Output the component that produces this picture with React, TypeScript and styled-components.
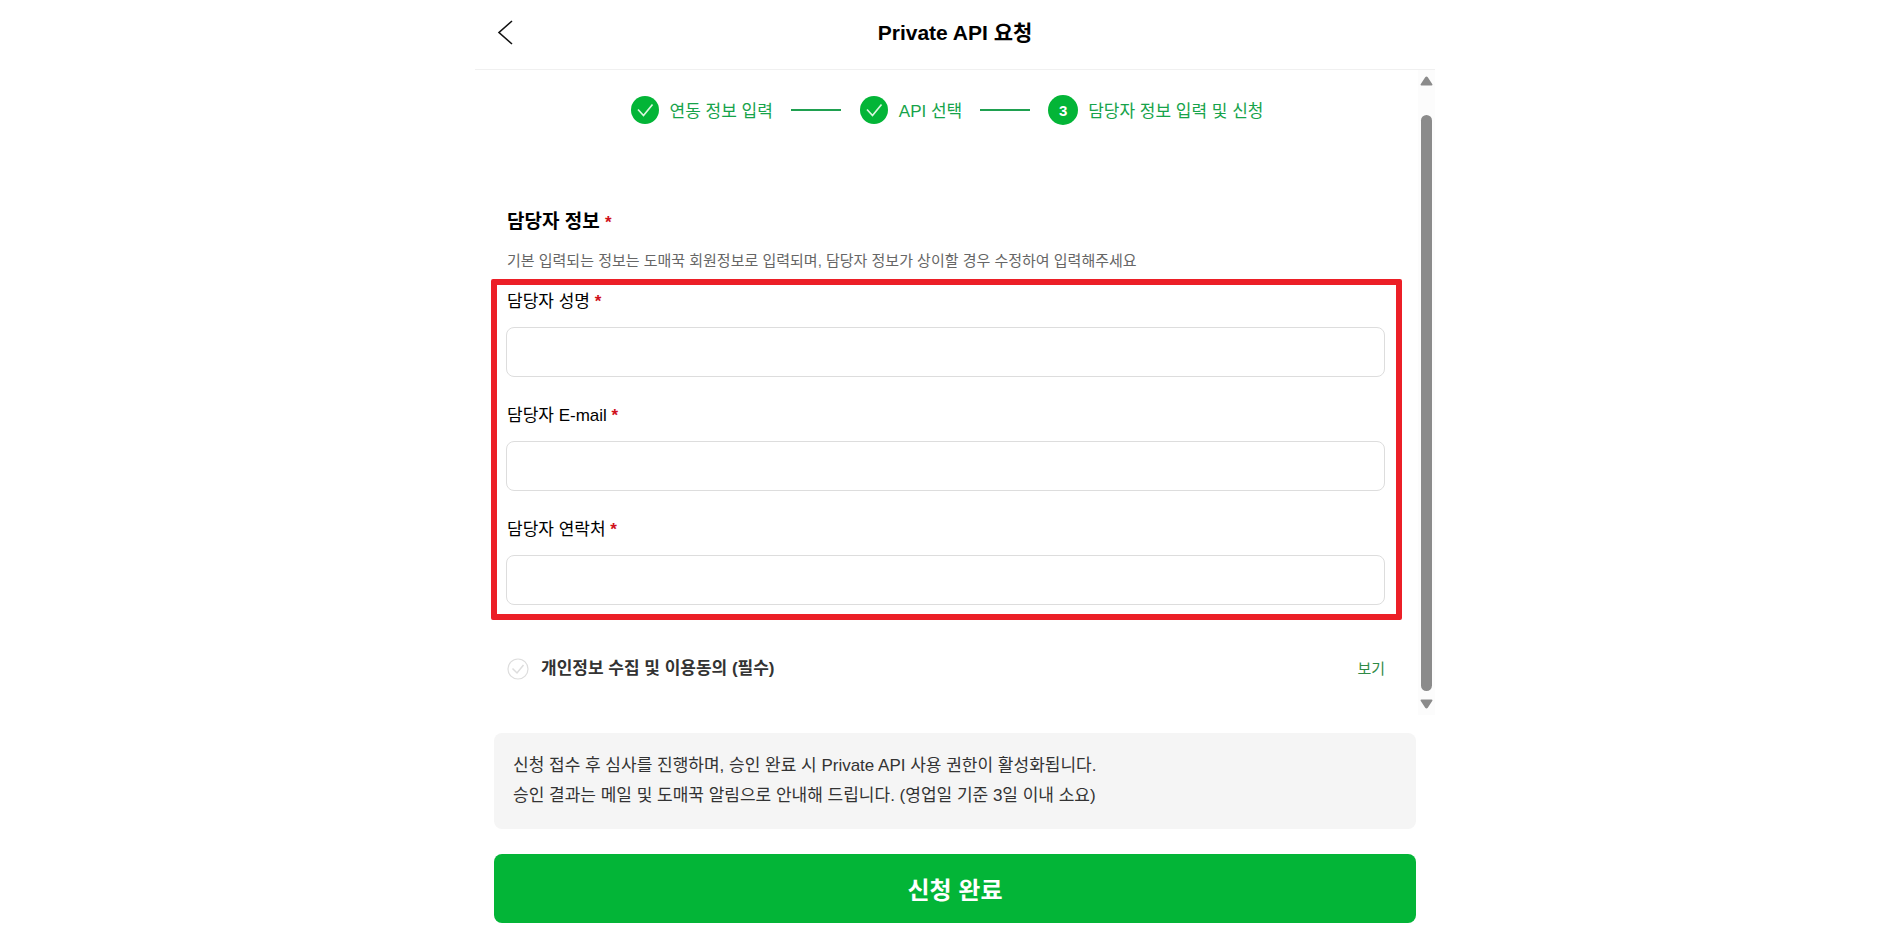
import React, { useState } from "react";
import styled, { createGlobalStyle } from "styled-components";

const GlobalStyle = createGlobalStyle`
  *, *::before, *::after { box-sizing: border-box; }
  body {
    margin: 0;
    padding-left: 10px;
    background: #fff;
    color: #000;
    font-family: "Liberation Sans", "Noto Sans CJK KR", sans-serif;
  }
  button, input { font-family: inherit; }
`;

const Page = styled.div`
  width: 100%;
  max-width: 960px;
  margin: 0 auto;
  padding-bottom: 12px;
`;

const Header = styled.header`
  display: grid;
  grid-template-columns: 60px 1fr 60px;
  align-items: center;
  height: 70px;
  padding-bottom: 4px;
  border-bottom: 1px solid #f0f0f0;
`;

const BackButton = styled.button`
  display: flex;
  align-items: center;
  justify-content: center;
  height: 40px;
  padding: 0;
  border: 0;
  background: none;
  cursor: pointer;
`;

const Title = styled.h1`
  margin: 0;
  font-size: 21px;
  line-height: 30px;
  text-align: center;
`;

const ScrollArea = styled.div`
  display: flex;
`;

const Content = styled.main`
  flex: 1;
  min-width: 0;
  padding: 23px 16px 30px;
`;

const Track = styled.div`
  display: flex;
  flex-direction: column;
  align-items: center;
  gap: 8px;
  width: 17px;
  padding: 6px 1px 6px 0;
  background: #fcfcfc;
`;

const Thumb = styled.div`
  flex: 1;
  width: 11px;
  margin-top: 21px;
  border-radius: 6px;
  background: #8b8b8b;
`;

const Steps = styled.ol`
  display: flex;
  align-items: center;
  justify-content: center;
  gap: 18px;
  margin: 0 0 78px;
  padding: 0;
  list-style: none;
`;

const Step = styled.li`
  display: flex;
  align-items: center;
  gap: 10px;
  color: #16a34a;
`;

const StepLabel = styled.span`
  padding-top: 4px;
  font-size: 17px;
  line-height: 30px;
`;

const StepLine = styled.li`
  width: 50px;
  height: 2px;
  background: #1fa050;
`;

const StepNumber = styled.span`
  display: flex;
  align-items: center;
  justify-content: center;
  width: 30px;
  height: 30px;
  border-radius: 50%;
  background: #03b537;
  color: #fff;
  font-size: 15px;
  font-weight: 700;
`;

const SectionTitle = styled.h2`
  margin: 0;
  padding: 0 16px;
  font-size: 19px;
  line-height: 34px;
`;

const Required = styled.span`
  color: #d0111b;
  font-size: 17px;
  font-weight: 700;
`;

const Description = styled.p`
  margin: 9px 0 6px;
  padding: 0 16px;
  color: #666;
  font-size: 15px;
  line-height: 24px;
`;

const Highlight = styled.div`
  display: flex;
  flex-direction: column;
  gap: 25px;
  padding: 3px 11px 9px 9px;
  border: 6px solid #ec1f27;
  border-radius: 2px;
`;

const Field = styled.div`
  display: flex;
  flex-direction: column;
  gap: 11px;
`;

const Label = styled.label`
  padding-left: 1px;
  font-size: 17px;
  line-height: 28px;
`;

const TextInput = styled.input`
  width: 100%;
  height: 50px;
  padding: 0 16px;
  border: 1px solid #ddd;
  border-radius: 8px;
  background: #fff;
  font-size: 17px;
`;

const Agreement = styled.div`
  display: flex;
  align-items: center;
  justify-content: space-between;
  margin-top: 33px;
  padding: 0 17px 0 16px;
`;

const AgreeLabel = styled.label`
  display: flex;
  align-items: center;
  gap: 12px;
  color: #333;
  font-size: 17px;
  font-weight: 700;
  line-height: 32px;
  cursor: pointer;
`;

const AgreeBox = styled.input`
  appearance: none;
  display: block;
  width: 22px;
  height: 22px;
  margin: 0;
  cursor: pointer;
`;

const BoxWrap = styled.span`
  display: grid;
  > * { grid-area: 1 / 1; }
  svg { pointer-events: none; }
`;

const ViewLink = styled.a`
  color: #2f8a46;
  font-size: 15px;
  line-height: 32px;
  text-decoration: none;
`;

const Footer = styled.footer`
  display: flex;
  flex-direction: column;
  gap: 25px;
  margin-top: 18px;
  padding: 0 19px;
`;

const Notice = styled.p`
  margin: 0;
  padding: 18px 19px;
  border-radius: 8px;
  background: #f5f5f5;
  color: #333;
  font-size: 17px;
  line-height: 30px;
`;

const SubmitButton = styled.button`
  height: 69px;
  padding: 0;
  border: 0;
  border-radius: 8px;
  background: #03b537;
  color: #fff;
  font-size: 24px;
  font-weight: 700;
  cursor: pointer;
`;

const CheckedStepIcon = () => (
  <svg width="30" height="30" viewBox="0 0 30 30" fill="none" aria-hidden="true">
    <circle cx="15" cy="15" r="14" fill="#03b537" />
    <path d="M8 14.5 L13.5 20.5 L22.5 9.5" stroke="#d9f7de" strokeWidth="1.7" />
  </svg>
);

const ArrowIcon = ({ down }: { down?: boolean }) => (
  <svg width="13" height="10" viewBox="0 0 13 10" aria-hidden="true">
    <path
      d={
        down
          ? "M1.5 0.5 H11.5 Q13 0.8 12.2 2 L7.8 8.8 Q6.5 10.4 5.2 8.8 L0.8 2 Q0 0.8 1.5 0.5 Z"
          : "M1.5 9.5 H11.5 Q13 9.2 12.2 8 L7.8 1.2 Q6.5 -0.4 5.2 1.2 L0.8 8 Q0 9.2 1.5 9.5 Z"
      }
      fill="#8b8b8b"
    />
  </svg>
);

const fields = [
  { id: "name", label: "담당자 성명", type: "text" },
  { id: "email", label: "담당자 E-mail", type: "email" },
  { id: "phone", label: "담당자 연락처", type: "tel" },
];

export default function App() {
  const [agreed, setAgreed] = useState(false);
  const tick = agreed ? "#03b537" : "#ddd";

  return (
    <>
      <GlobalStyle />
      <Page>
        <Header>
          <BackButton type="button" aria-label="뒤로">
            <svg width="16" height="26" viewBox="0 0 16 26" fill="none" aria-hidden="true">
              <path d="M15 1 L2 12.5 L15 24" stroke="#111" strokeWidth="1.6" />
            </svg>
          </BackButton>
          <Title>Private API 요청</Title>
        </Header>

        <ScrollArea>
          <Content>
            <Steps>
              <Step>
                <CheckedStepIcon />
                <StepLabel>연동 정보 입력</StepLabel>
              </Step>
              <StepLine aria-hidden="true" />
              <Step>
                <CheckedStepIcon />
                <StepLabel>API 선택</StepLabel>
              </Step>
              <StepLine aria-hidden="true" />
              <Step aria-current="step">
                <StepNumber>3</StepNumber>
                <StepLabel>담당자 정보 입력 및 신청</StepLabel>
              </Step>
            </Steps>

            <SectionTitle>
              담당자 정보 <Required>*</Required>
            </SectionTitle>
            <Description>
              기본 입력되는 정보는 도매꾹 회원정보로 입력되며, 담당자 정보가 상이할 경우 수정하여 입력해주세요
            </Description>

            <Highlight>
              {fields.map((f) => (
                <Field key={f.id}>
                  <Label htmlFor={f.id}>
                    {f.label} <Required>*</Required>
                  </Label>
                  <TextInput id={f.id} type={f.type} required />
                </Field>
              ))}
            </Highlight>

            <Agreement>
              <AgreeLabel>
                <BoxWrap>
                  <AgreeBox
                    type="checkbox"
                    checked={agreed}
                    onChange={(e) => setAgreed(e.target.checked)}
                  />
                  <svg width="22" height="22" viewBox="0 0 22 22" fill="none" aria-hidden="true">
                    <circle cx="11" cy="11" r="10" stroke={tick} strokeWidth="1.2" />
                    <path d="M5.5 10.5 L10 15 L16.5 7" stroke={tick} strokeWidth="1.5" />
                  </svg>
                </BoxWrap>
                개인정보 수집 및 이용동의 (필수)
              </AgreeLabel>
              <ViewLink href="#privacy">보기</ViewLink>
            </Agreement>
          </Content>

          <Track aria-hidden="true">
            <ArrowIcon />
            <Thumb />
            <ArrowIcon down />
          </Track>
        </ScrollArea>

        <Footer>
          <Notice>
            신청 접수 후 심사를 진행하며, 승인 완료 시 Private API 사용 권한이 활성화됩니다.
            <br />
            승인 결과는 메일 및 도매꾹 알림으로 안내해 드립니다. (영업일 기준 3일 이내 소요)
          </Notice>
          <SubmitButton type="submit">신청 완료</SubmitButton>
        </Footer>
      </Page>
    </>
  );
}
